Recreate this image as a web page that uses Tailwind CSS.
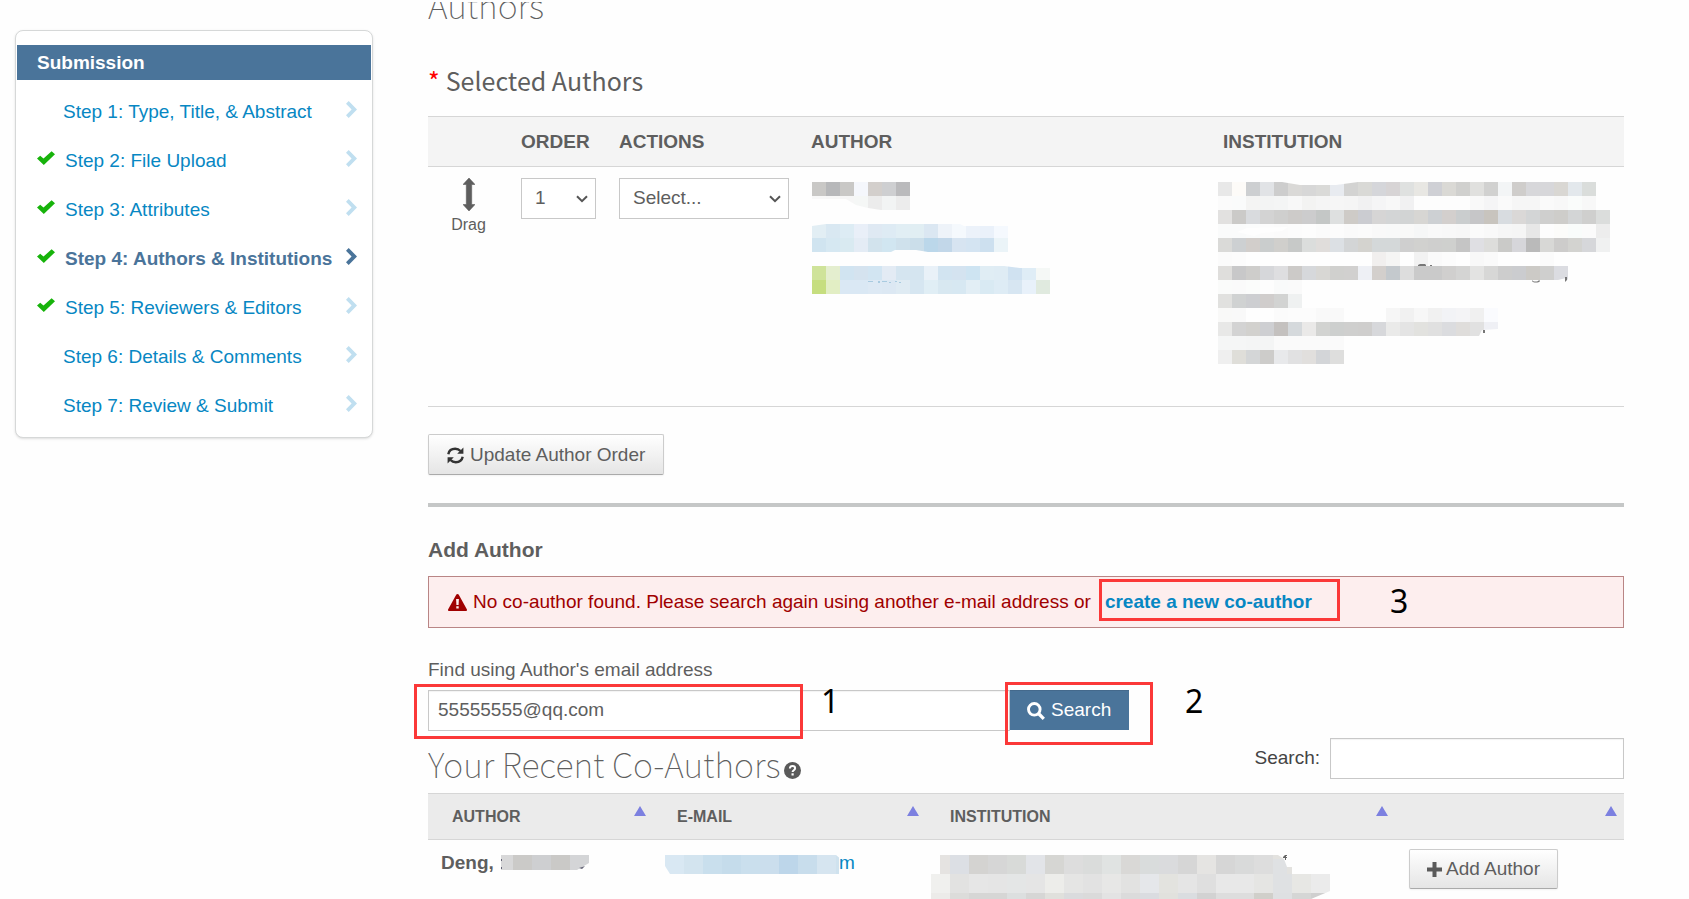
<!DOCTYPE html>
<html lang="en">
<head>
<meta charset="utf-8">
<title>Submission - Authors &amp; Institutions</title>
<script src="https://cdn.jsdelivr.net/npm/@tailwindcss/browser@4"></script>
</head>
<body class="bg-[#fefefe] font-['Liberation_Sans',Arial,sans-serif] text-[19px] leading-6 text-[#5e5e5e]">
<svg class="hidden" aria-hidden="true">
  <symbol id="check" viewBox="0 0 18 14"><path d="M0 7.6 3.2 4.8 6.5 7.6 14.6 0.2 18 3.2 6.8 14Z" fill="#17b30b"/></symbol>
  <symbol id="chevron" viewBox="0 0 11 17"><path d="M2.7 0 11 8.5 2.7 17 0 14.3 5.6 8.5 0 2.7Z" fill="currentColor"/></symbol>
  <symbol id="caret" viewBox="0 0 12 8"><path d="M1 1.2 6 6.2 11 1.2" fill="none" stroke="#555" stroke-width="2"/></symbol>
  <symbol id="sort" viewBox="0 0 12 10"><path d="M6 0 12 10H0Z" fill="#7c80e0"/></symbol>
</svg>
<div class="flex items-start">
  <nav class="mt-[30px] ml-[15px] w-[358px] shrink-0 rounded-lg border border-[#d6d8d8] bg-white pt-[14px] pb-[7px] shadow-sm" aria-label="Submission steps">
    <h2 class="mx-px flex h-[35px] items-center bg-[#4a749a] pl-5 font-bold text-white">Submission</h2>
    <ul class="pt-[7px] text-[#0787c3]">
      <li><a href="#" class="flex h-[49px] items-center pr-[15px] pl-[47px]"><span class="grow">Step 1: Type, Title, &amp; Abstract</span><svg class="mb-1 h-[17px] w-[11px] text-[#c0dff0]"><use href="#chevron"/></svg></a></li>
      <li><a href="#" class="flex h-[49px] items-center pr-[15px] pl-[21px]"><svg class="mr-[10px] mb-1.5 h-[14px] w-[18px]"><use href="#check"/></svg><span class="grow">Step 2: File Upload</span><svg class="mb-1 h-[17px] w-[11px] text-[#c0dff0]"><use href="#chevron"/></svg></a></li>
      <li><a href="#" class="flex h-[49px] items-center pr-[15px] pl-[21px]"><svg class="mr-[10px] mb-1.5 h-[14px] w-[18px]"><use href="#check"/></svg><span class="grow">Step 3: Attributes</span><svg class="mb-1 h-[17px] w-[11px] text-[#c0dff0]"><use href="#chevron"/></svg></a></li>
      <li><a href="#" class="flex h-[49px] items-center pr-[15px] pl-[21px] font-bold text-[#4a749a]" aria-current="step"><svg class="mr-[10px] mb-1.5 h-[14px] w-[18px]"><use href="#check"/></svg><span class="grow whitespace-nowrap">Step 4: Authors &amp; Institutions</span><svg class="mb-1 h-[17px] w-[11px]"><use href="#chevron"/></svg></a></li>
      <li><a href="#" class="flex h-[49px] items-center pr-[15px] pl-[21px]"><svg class="mr-[10px] mb-1.5 h-[14px] w-[18px]"><use href="#check"/></svg><span class="grow">Step 5: Reviewers &amp; Editors</span><svg class="mb-1 h-[17px] w-[11px] text-[#c0dff0]"><use href="#chevron"/></svg></a></li>
      <li><a href="#" class="flex h-[49px] items-center pr-[15px] pl-[47px]"><span class="grow">Step 6: Details &amp; Comments</span><svg class="mb-1 h-[17px] w-[11px] text-[#c0dff0]"><use href="#chevron"/></svg></a></li>
      <li><a href="#" class="flex h-[49px] items-center pr-[15px] pl-[47px]"><span class="grow">Step 7: Review &amp; Submit</span><svg class="mb-1 h-[17px] w-[11px] text-[#c0dff0]"><use href="#chevron"/></svg></a></li>
    </ul>
  </nav>

  <main class="mr-[65px] ml-[55px] min-w-0 grow">
    <div class="mt-0.5 flex h-6 items-end overflow-hidden">
      <h1 class="font-['Noto_Sans_CJK_SC','Noto_Sans',sans-serif] text-[34px] leading-[42px] font-thin">Authors</h1>
    </div>
    <h2 class="mt-[34px] mb-4 flex h-10 items-center gap-1.5 font-['Noto_Sans_CJK_SC','Noto_Sans',sans-serif] text-[25px]"><span class="text-[#f00]">*</span>Selected Authors</h2>

    <table class="w-full table-fixed border-collapse border-y border-[#d6d6d6] text-left">
      <colgroup><col class="w-[81px]"><col class="w-[98px]"><col class="w-[192px]"><col class="w-[412px]"><col></colgroup>
      <thead class="border-b border-[#d6d6d6] bg-[#f4f4f4]">
        <tr class="h-[50px]"><th></th><th class="pl-3">ORDER</th><th class="pl-3">ACTIONS</th><th class="pl-3">AUTHOR</th><th class="pl-3">INSTITUTION</th></tr>
      </thead>
      <tbody>
        <tr class="h-[240px] align-top">
          <td class="pt-[11px]">
            <div class="flex flex-col items-center text-[16px] leading-5">
              <svg class="mb-1 h-[33px] w-3" viewBox="0 0 12 33" aria-hidden="true"><path d="M6 0 12 6.5H8.7V26.5H12L6 33 0 26.5H3.3V6.5H0Z" fill="#5e5e5e" stroke="#5e5e5e" stroke-width=".6"/></svg>
              Drag
            </div>
          </td>
          <td class="pt-[11px] pl-3">
            <div class="relative w-[75px]">
              <select aria-label="Order" class="h-[41px] w-full appearance-none border border-[#c8c8c8] bg-white pb-0.5 pl-[13px]"><option>1</option></select>
              <svg class="pointer-events-none absolute top-[17px] right-2 h-2 w-3"><use href="#caret"/></svg>
            </div>
          </td>
          <td class="pt-[11px] pl-3">
            <div class="relative w-[170px]">
              <select aria-label="Actions" class="h-[41px] w-full appearance-none border border-[#c8c8c8] bg-white pb-0.5 pl-[13px]"><option>Select...</option></select>
              <svg class="pointer-events-none absolute top-[17px] right-2 h-2 w-3"><use href="#caret"/></svg>
            </div>
          </td>
          <td class="pt-[15px] pl-[13px]"><svg id="mosaic-author" width="240" height="114" aria-hidden="true"></svg></td>
          <td class="pt-[15px] pl-[7px]"><svg id="mosaic-institution" width="394" height="184" aria-hidden="true"></svg></td>
        </tr>
      </tbody>
    </table>

    <button type="button" class="mt-[27px] flex h-[41px] items-center gap-1.5 rounded-xs border border-[#ccc] border-b-[#aaa] bg-linear-to-b from-white to-[#e5e5e5] px-[18px] shadow-xs">
      <svg class="mt-0.5 size-[17px]" viewBox="0 0 17 17" fill="none" stroke="#333" stroke-width="2.4" aria-hidden="true"><path d="M1.3 7.2C2 3.8 4.8 1.8 8.2 1.8c2.2 0 4 .8 5.3 2.2M15.7 9.8c-.7 3.4-3.5 5.4-6.9 5.4-2.2 0-4-.8-5.3-2.2"/><path d="M16.4.6v6.2h-6.2ZM.6 16.4v-6.2h6.2Z" fill="#333" stroke="none"/></svg>
      Update Author Order
    </button>
    <hr class="mt-7 border-t-4 border-[#c5c7c7]">
    <h3 class="mt-[31px] mb-[14px] text-[21px] font-bold">Add Author</h3>

    <div class="relative flex h-[52px] items-center border border-[#b98585] bg-[#fdeeee] pl-[19px] text-[#a00000]">
      <svg class="mr-1.5 h-[17px] w-[19px]" viewBox="0 0 19 17" aria-hidden="true"><path d="M9.5 0c.6 0 1 .3 1.300.8l8 14.500c.5.900 0 1.700-1 1.700H1.200c-1 0-1.500-.8-1-1.700l8-14.500C8.500.3 8.900 0 9.500 0Z" fill="#a00000"/><path d="M8.100 5h2.800l-.3 6H8.400ZM8.300 12.200h2.400v2.400H8.300Z" fill="#fdeeee"/></svg>
      <p class="flex gap-[14px]">No co-author found. Please search again using another e-mail address or <a href="#" class="font-bold text-[#0787c3]">create a new co-author</a></p>
      <span class="absolute top-0.5 left-[670px] h-[42px] w-[241px] border-3 border-[#fb3838]"></span>
      <span class="absolute top-1 left-[961px] font-['Noto_Sans',sans-serif] text-[32px] leading-10 text-black">3</span>
    </div>

    <label for="email" class="mt-[30px] mb-2 block">Find using Author's email address</label>
    <div class="relative flex">
      <input id="email" type="text" value="55555555@qq.com" class="h-[41px] w-[582px] border border-[#c8c8c8] bg-white pb-0.5 pl-[9px] inset-shadow-xs">
      <button type="button" class="flex h-10 w-[119px] items-center gap-1.5 border-t border-[#44698c] bg-[#4a749a] pb-0.5 pl-[17px] text-white">
        <svg class="mt-0.5 size-[18px]" viewBox="0 0 18 18" fill="none" stroke="#fff" aria-hidden="true"><circle cx="7.300" cy="7.300" r="5.800" stroke-width="2.900"/><path d="M11.500 11.500 16.800 16.800" stroke-width="3.300"/></svg>
        Search
      </button>
      <span class="absolute -top-1.5 -left-[14px] h-[55px] w-[389px] border-3 border-[#fb3838]"></span>
      <span class="absolute -top-2 left-[577px] h-[63px] w-[148px] border-3 border-[#fb3838]"></span>
      <span class="absolute -top-[9px] left-[393px] font-['Noto_Sans',sans-serif] text-[32px] leading-10 text-black">1</span>
      <span class="absolute -top-[9px] left-[757px] font-['Noto_Sans',sans-serif] text-[32px] leading-10 text-black">2</span>
    </div>

    <div class="mt-[7px] flex h-[55px] justify-between">
      <h2 class="flex items-center gap-1 pt-1 pb-2 font-['Noto_Sans_CJK_SC','Noto_Sans',sans-serif] text-[34px] leading-10 font-thin">Your Recent Co-Authors
        <svg class="mt-[13px] size-[17px]" viewBox="0 0 17 17" aria-hidden="true"><circle cx="8.500" cy="8.500" r="8.500" fill="#5a5a5a"/><path d="M5.900 6.500C6 4.900 7 4.100 8.500 4.100s2.600.8 2.600 2.200c0 1.900-2.500 1.900-2.500 3.700" fill="none" stroke="#fff" stroke-width="2"/><path d="M7.500 11.300h2.200v2.200H7.500Z" fill="#fff"/></svg>
      </h2>
      <div class="flex h-[41px] items-center gap-[10px] text-[#444]">
        <label for="filter" class="pb-0.5">Search:</label>
        <input id="filter" type="search" class="h-[41px] w-[294px] border border-[#c8c8c8] bg-white px-2 inset-shadow-xs">
      </div>
    </div>

    <table class="w-full table-fixed border-collapse text-left">
      <colgroup><col class="w-[225px]"><col class="w-[273px]"><col class="w-[469px]"><col></colgroup>
      <thead class="border-y border-[#d6d6d6] bg-[#ebebeb] text-[16px]">
        <tr class="h-[46px]">
          <th class="pr-[7px] pl-6"><div class="flex h-6 justify-between">AUTHOR<svg class="mt-px h-[10px] w-3"><use href="#sort"/></svg></div></th>
          <th class="pr-[7px] pl-6"><div class="flex h-6 justify-between">E-MAIL<svg class="mt-px h-[10px] w-3"><use href="#sort"/></svg></div></th>
          <th class="pr-[7px] pl-6"><div class="flex h-6 justify-between">INSTITUTION<svg class="mt-px h-[10px] w-3"><use href="#sort"/></svg></div></th>
          <th class="pr-[7px] pl-6"><div class="flex h-6 justify-end"><svg class="mt-px h-[10px] w-3"><use href="#sort"/></svg></div></th>
        </tr>
      </thead>
      <tbody>
        <tr class="align-top">
          <td class="pt-[9px] pl-[13px]"><div class="flex"><span class="pt-0.5 font-bold">Deng,</span><svg id="mosaic-name" class="ml-[7px]" width="90" height="24" aria-hidden="true"></svg></div></td>
          <td class="pt-[9px] pl-3"><div class="flex text-[#0787c3]"><svg id="mosaic-email" width="174" height="27" aria-hidden="true"></svg><span class="pt-0.5">m</span></div></td>
          <td class="pt-[9px] pl-[5px]"><svg id="mosaic-place" width="400" height="50" aria-hidden="true"></svg></td>
          <td class="pt-[9px] pl-[14px]">
            <button type="button" class="flex h-10 items-center gap-1 rounded-xs border border-[#ccc] border-b-[#aaa] bg-linear-to-b from-white to-[#e5e5e5] px-[17px] shadow-xs">
              <svg class="size-[15px]" viewBox="0 0 15 15" aria-hidden="true"><path d="M5.500 0h4v5.500H15v4H9.500V15h-4V9.500H0v-4h5.500Z" fill="#5a5a5a"/></svg>
              Add Author
            </button>
          </td>
        </tr>
      </tbody>
    </table>
  </main>
</div>
<script>
// Redaction mosaics. Each row: [x, y, cell size, height, "colours"]; "-" leaves a cell empty.
const mosaics = {
  author: { rows: [
    [0,0,14,14,"c9c8c6 b7b8ba c9c8c6 f5f7fc d3cfcc cecfd1 bababc"],
    [0,14,14,14,"f8f8f8 f7f7f7 f6f6f6 f5f7f6 ececec f2f4f4 ececec"],
    [0,42,14,14,"e2eef4 d9e8f2 ddecf4 e9eff8 dfe9f3 deebf4 e1eef4 e1eef3 dbe7f2 eef3f9 f5f9fd ecf2fa eaf1fa f5f9fe"],
    [0,56,14,14,"d0e4f0 d6e8f2 d9eaf1 e4ecf5 d2e3ed d1e6f1 cfe1ec cbdeea bbd7ea c2d7e9 d7e4f1 d4e4f2 cde0ef ebf4f8"],
    [0,84,14,14,"cfe39a e4eecf d1e4f1 d5e3ef d2e5f2 e3ebf4 d5e5f0 d5e5f0 e9f1f8 d2e4f1 d4e3f0 cee4f2 e0edf4 dfecf4 d0e2f1 dfedf6 f5f8f6"],
    [0,98,14,14,"c6de7f e2eec4 dae8f4 dae8f4 dde9f4 dce8f3 dfebf3 d6e6f1 e0eef5 d8e8f1 d7e8f2 e2eef5 d9eaf3 deecf5 d7e6f2 e8f1fa e0eadf"]],
    white: "M0 17H34L44 23 56 26 69 28H0ZM0 42H14L0 44ZM148 42H200V44H152ZM79 70 83 68H104L116 70ZM192 84H240V86H208Z",
    ink: "M56 99h5v1h-5zM66 99h2v2h-2zM70 99h5v1h-5zM77 100h2v1h-2zM83 99h2v1h-2zM87 100h2v1h-2z", inkColor: "#a9cbe0" },
  institution: { rows: [
    [0,0,14,14,"e8e8e8 fdfbf8 cdcfd1 e1e3e6 cdcdcd dad9d7 d7d7d7 dadad8 e8ebf0 d3d3d2 d9d9d6 d5d6da d7d4d5 dfe1e0 e8e7e3 cfd0d5 dad9d5 d0d0ce e0e0de d1d1d0 f3f5f6 cfcdcb d7d7da d7d7da d9d7d3 e3e8ec dadddb"],
    [0,14,14,14,"fbfbfb fafbfb f4f4f3 f3f4f4 f4f5f5 f8f8f8 f3f3f2 f5f5f5 f6f6f6 f5f5f5 f1f1f2 f5f5f6 f8f8f8 f1f1f2 fdfdfd fdfdfd fdfdfd fdfdfd f9f9f9 f5f5f6 fafafa f6f6f6 f6f6f6 fafafa f8f8f8 fafcfb f8f8f8"],
    [0,28,14,14,"e2e1e0 cbcac8 d9dbde d3d3d3 cfcfce cdcbc9 cccccd c4c7c6 dee0e0 cecbc7 cbccd1 d6d5d5 d3d5d6 d2d4d4 d7d6d3 cdd0d3 d3cfcd cacdce c6c6c8 c8c4be d8dce0 dad8d7 d3d5d6 cfcfce cecdca d3d5d6 cfcfce dbdddc"],
    [0,42,14,14,"fafbfb fafbfb fbfcfc fcfcfc fbfbfb fcfcfc fdfdfd fbfbfb fcfcfc fafafa fbfbfb f9f9f9 f8f9f9 f9f9f8 f6f7f7 f9f9f9 f8f8f8 f7f7f7 fbfbfb f9f9f9 f6f6f6 f5f5f5 e7e7e7 fdfdfd fcfcfa f9fcfb fbfbfb ededed"],
    [0,56,14,14,"dadad8 cdd0d2 d2cecb cacdcd d0cfcc c7c9c8 dbdddc e0dddb dce0e4 d3d5d6 d4d3cf d4d8d9 d4d8d9 cfcfcf d1d1cf cfcfce cfd0ce c5c5c5 dfdfe3 dddddb cacac8 d6d6da bababa d8d8d6 cdcccb d3d3d0 d6d7da f0f1f1"],
    [0,70,14,14,"fbfbfb fcfcfc - - - - - - - - - f1efee f5f5f4 - f2f2f2 fafafa fcfcfc - f8f8f8 fafafa - - - fbfbfb"],
    [0,84,14,14,"dfdedc c8c8c9 cecdcb d6d7da dedee0 cccac8 d6d8db d8d7d4 d0d0ce d1d0cf eef0f5 d3cfcc c4c9cd dddddd cacaca cacaca d0cfce d4d4d3 e3e3e2 d7d7d6 cdcdcd cbcccf cccac6 cfcfce dbdce1"],
    [0,98,14,14,"fafbfa fafafa fbfcfb fdfdfd f9fafa fafafa"],
    [0,112,14,14,"e1e1df d0d2d2 cdced1 d0cdcc d2d3d2 eff1f1"],
    [0,126,14,14,"f9f9f8 f9f9f9 - - fbfbfb fcfcfc fcfcfc f9f9f9 f9f9f9 - - - f6f6f6 f1f1f1 f7f7f7 f1f1f1 f2f3f6 f4f4f6 f0f0f0 fafbfe"],
    [0,140,14,14,"e8e8e7 d3d3d3 d2d1ce cecfd2 c4c1bf d5d9dc eae9e8 d2d3d1 cdcfce cfcfce cfcecd d7d8db eaeae9 e4e4e4 e2e2df e0e0e0 dbdcdf dfdddb e1e1e1 eff0f5"],
    [0,154,14,14,"f5f6f6 f5f6f6 f4f5f5 f4f5f5 fafafa fafafa fafafa fafafa fafafa"],
    [0,168,14,14,"efefef dfded9 d4d6d7 cdccca e8e9eb e1e1e2 e1dfdd d3d5d8 dededd"]],
    white: "M64 0 82 3H118L140 0ZM19 50 29 46 70 45 64 49 44 51 36 54ZM350 98 340 98 348 96ZM261 154 264 148 280 147V154Z",
    ink: "M200 83l2-1h5l1 1v1h-8zM212 83h2v1h-2zM314 98c1 2 6 2 7 0l1 1c-1 2-7 2-8 0zM347 95h2v3l-2 2zM265 148h2v3h-2z", inkColor: "#777" },
  name: { rows: [
    [0,6,12,15,"d8d8d9"],
    [12,6,19,15,"cbcac8 cecfd1 cac9c7 d4d5d7"]],
    white: "M88 14 76 21H88Z", ink: "M0 10h1v2h-1zM0 18h1v2h-1zM78 19 84 17 81 20Z", inkColor: "#667" },
  email: { rows: [
    [0,6,19,19,"d9e8f3 d3e4ef c9dfed c5dceb cadfed cbdeed bdd6ea c8ddec d6e5f0"],
    [171,6,5,19,"cfe2ee"]],
    white: "M0 17V25H5ZM176 6V10L171 6Z" },
  place: { rows: [
    [9,6,10,19,"e5e3e1"],
    [19,6,19,19,"dcdfe4 d4d3d1 d6d6d6 d8dad8 e2e4e8 d6d6d3 dddddd dadcdb e0e3e2 d9d8d6 d9dcdc dadbdd d6d6d6 e5e4e2 d6d6d6 d9dada dddddd e3e2df"],
    [342,10,14,15,"dfe1e3"],
    [0,25,19,19,"f0f0ee e2e2e1 e6e6e6 e5e5e5 e4e6e6 e5e5e5 ededea e5e5e4 e2e2e2 e7e7e6 e2e2e1 e5e7ea e3e3df e5e5e5 dfdfdf e8e8e8 e8e8e8 e5e5e3 dfe1e3 e7e7e4 ebebeb"],
    [0,44,19,6,"ecebe9 dcdcda d6d6d5 d6d6d5 dcdfdf d6d6d5 e0e0dc dadbdd dadada e3e3e3 dbdbdb dadce0 e1e1dd dadde0 d2d2d2 dddddd dddddd d0cfca dee0e2 d5d6d5 cfcfcf"]],
    white: "M347 6H361V18H356L353 10ZM380 50 399 42V50Z", ink: "M352 8l2-2h2v1h-1v1h1v1h-1v2h-1v-2h-2z", inkColor: "#666" }
};
const NS = "http://www.w3.org/2000/svg";
for (const [name, m] of Object.entries(mosaics)) {
  const svg = document.getElementById("mosaic-" + name);
  const add = (tag, attrs) => {
    const el = document.createElementNS(NS, tag);
    for (const k in attrs) el.setAttribute(k, attrs[k]);
    svg.append(el);
  };
  for (const [x, y, w, h, colors] of m.rows)
    colors.split(" ").forEach((c, i) => {
      if (c !== "-") add("rect", { x: x + i * w, y, width: w, height: h, fill: "#" + c, "shape-rendering": "crispEdges" });
    });
  if (m.white) add("path", { d: m.white, fill: "#fefefe" });
  if (m.ink) add("path", { d: m.ink, fill: m.inkColor });
}
</script>
</body>
</html>
